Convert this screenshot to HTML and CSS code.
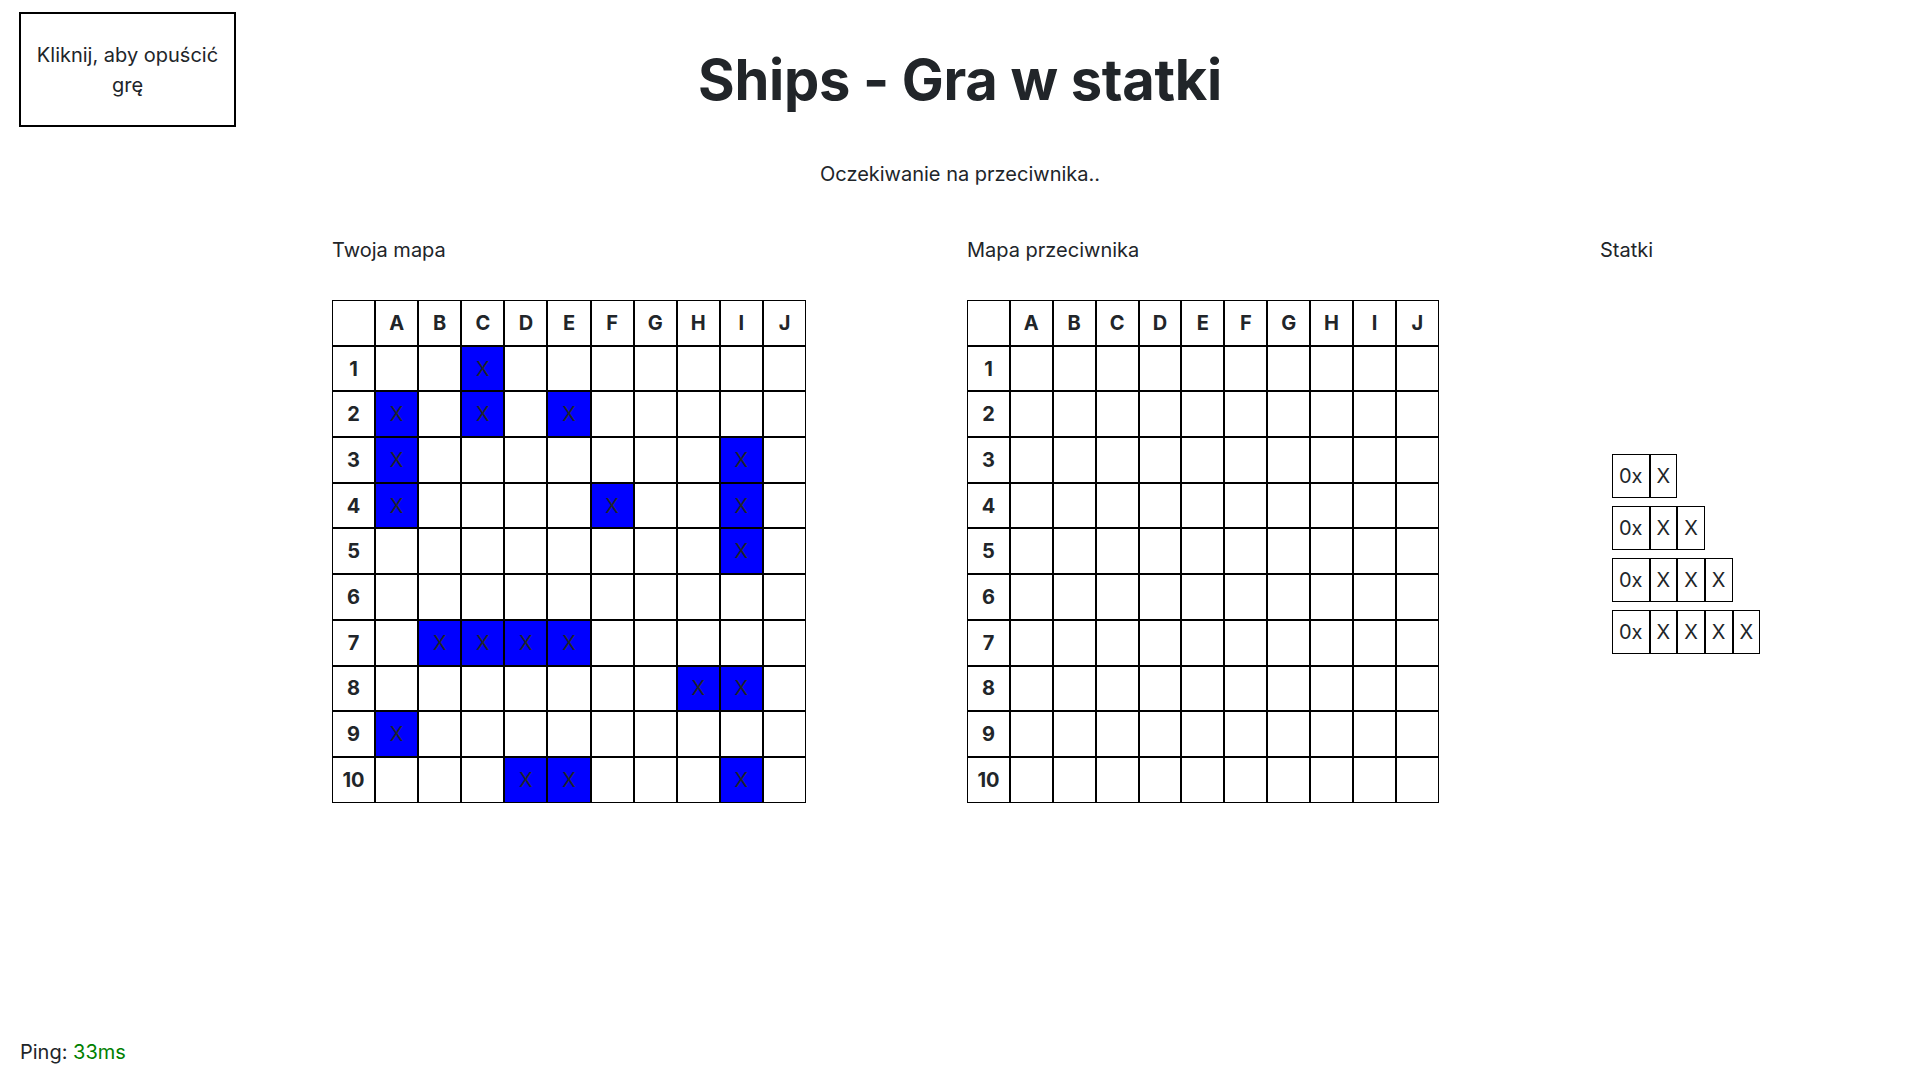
FILE: index.html
```html
<!DOCTYPE html>
<html lang="pl">
<head>
<meta charset="utf-8">
<title>Ships - Gra w statki</title>
<link rel="stylesheet" href="styles.css">
</head>
<body>
<header class="top">
  <button class="leave">Kliknij, aby opuścić grę</button>
  <h1 class="title">Ships - Gra w statki</h1>
  <div></div>
</header>
<p class="status">Oczekiwanie na przeciwnika..</p>
<main class="boards">
  <section class="col col-own">
    <p class="label">Twoja mapa</p>
    <table class="grid">
      <tr><th></th><th>A</th><th>B</th><th>C</th><th>D</th><th>E</th><th>F</th><th>G</th><th>H</th><th>I</th><th>J</th></tr>
      <tr><th>1</th><td></td><td></td><td class="ship">X</td><td></td><td></td><td></td><td></td><td></td><td></td><td></td></tr>
      <tr><th>2</th><td class="ship">X</td><td></td><td class="ship">X</td><td></td><td class="ship">X</td><td></td><td></td><td></td><td></td><td></td></tr>
      <tr><th>3</th><td class="ship">X</td><td></td><td></td><td></td><td></td><td></td><td></td><td></td><td class="ship">X</td><td></td></tr>
      <tr><th>4</th><td class="ship">X</td><td></td><td></td><td></td><td></td><td class="ship">X</td><td></td><td></td><td class="ship">X</td><td></td></tr>
      <tr><th>5</th><td></td><td></td><td></td><td></td><td></td><td></td><td></td><td></td><td class="ship">X</td><td></td></tr>
      <tr><th>6</th><td></td><td></td><td></td><td></td><td></td><td></td><td></td><td></td><td></td><td></td></tr>
      <tr><th>7</th><td></td><td class="ship">X</td><td class="ship">X</td><td class="ship">X</td><td class="ship">X</td><td></td><td></td><td></td><td></td><td></td></tr>
      <tr><th>8</th><td></td><td></td><td></td><td></td><td></td><td></td><td></td><td class="ship">X</td><td class="ship">X</td><td></td></tr>
      <tr><th>9</th><td class="ship">X</td><td></td><td></td><td></td><td></td><td></td><td></td><td></td><td></td><td></td></tr>
      <tr><th>10</th><td></td><td></td><td></td><td class="ship">X</td><td class="ship">X</td><td></td><td></td><td></td><td class="ship">X</td><td></td></tr>
    </table>
  </section>
  <section class="col col-enemy">
    <p class="label">Mapa przeciwnika</p>
    <table class="grid">
      <tr><th></th><th>A</th><th>B</th><th>C</th><th>D</th><th>E</th><th>F</th><th>G</th><th>H</th><th>I</th><th>J</th></tr>
      <tr><th>1</th><td></td><td></td><td></td><td></td><td></td><td></td><td></td><td></td><td></td><td></td></tr>
      <tr><th>2</th><td></td><td></td><td></td><td></td><td></td><td></td><td></td><td></td><td></td><td></td></tr>
      <tr><th>3</th><td></td><td></td><td></td><td></td><td></td><td></td><td></td><td></td><td></td><td></td></tr>
      <tr><th>4</th><td></td><td></td><td></td><td></td><td></td><td></td><td></td><td></td><td></td><td></td></tr>
      <tr><th>5</th><td></td><td></td><td></td><td></td><td></td><td></td><td></td><td></td><td></td><td></td></tr>
      <tr><th>6</th><td></td><td></td><td></td><td></td><td></td><td></td><td></td><td></td><td></td><td></td></tr>
      <tr><th>7</th><td></td><td></td><td></td><td></td><td></td><td></td><td></td><td></td><td></td><td></td></tr>
      <tr><th>8</th><td></td><td></td><td></td><td></td><td></td><td></td><td></td><td></td><td></td><td></td></tr>
      <tr><th>9</th><td></td><td></td><td></td><td></td><td></td><td></td><td></td><td></td><td></td><td></td></tr>
      <tr><th>10</th><td></td><td></td><td></td><td></td><td></td><td></td><td></td><td></td><td></td><td></td></tr>
    </table>
  </section>
  <section class="col col-ships">
    <p class="label">Statki</p>
    <div class="fleet">
      <table class="ship-row"><tr><td>0x</td><td>X</td></tr></table>
      <table class="ship-row"><tr><td>0x</td><td>X</td><td>X</td></tr></table>
      <table class="ship-row"><tr><td>0x</td><td>X</td><td>X</td><td>X</td></tr></table>
      <table class="ship-row"><tr><td>0x</td><td>X</td><td>X</td><td>X</td><td>X</td></tr></table>
    </div>
  </section>
</main>
<footer class="ping">Ping: <span class="ping-value">33ms</span></footer>
</body>
</html>
```

FILE: styles.css
```css
* { box-sizing: border-box; }

html, body { height: 100%; }

body {
  margin: 0;
  min-height: 100vh;
  display: flex;
  flex-direction: column;
  font-family: Inter, "Noto Sans", sans-serif;
  font-size: 20px;
  line-height: 1.5;
  color: #212529;
  background: #fff;
}

.top {
  display: grid;
  grid-template-columns: 1fr auto 1fr;
  align-items: start;
  padding-top: 12px;
}

.leave {
  margin-left: 19px;
  width: 217px;
  height: 115px;
  padding: 0 12px;
  border: 2px solid #000;
  background: #fff;
  color: #212529;
  font: inherit;
  line-height: 30px;
  text-align: center;
  cursor: pointer;
}

.title {
  margin: 35px 0 0;
  font-size: 56px;
  font-weight: 700;
  line-height: 1.2;
  letter-spacing: -0.3px;
  text-align: center;
}

.status {
  margin: 32px 0 0;
  text-align: center;
}

.boards {
  display: flex;
  padding-left: 332px;
  margin-top: 46px;
}

.col-own { width: 635px; }
.col-enemy { width: 633px; }
.col-ships { flex: 1; }

.label {
  margin: 0 0 35px;
}

.grid {
  border-collapse: separate;
  border-spacing: 0;
  table-layout: fixed;
}

.grid th,
.grid td {
  width: 43.1px;
  height: 45.7px;
  padding: 0;
  border: 1px solid #000;
  text-align: center;
  vertical-align: middle;
  font-weight: 400;
}

.col-enemy .grid th,
.col-enemy .grid td {
  width: 42.9px;
}

.grid th {
  font-weight: 700;
}

.grid td.ship {
  background: #0000ff;
  color: #212529;
}

.fleet {
  height: 502px;
  padding-top: 6px;
  padding-left: 12px;
  display: flex;
  flex-direction: column;
  justify-content: center;
  align-items: flex-start;
  gap: 8px;
}

.ship-row {
  border-collapse: separate;
  border-spacing: 0;
}

.ship-row td {
  padding: 6px;
  border: 1px solid #000;
  line-height: 30px;
  text-align: center;
}

.ping {
  margin-top: auto;
  padding: 0 0 13px 20px;
}

.ping-value {
  color: #008000;
}
```
